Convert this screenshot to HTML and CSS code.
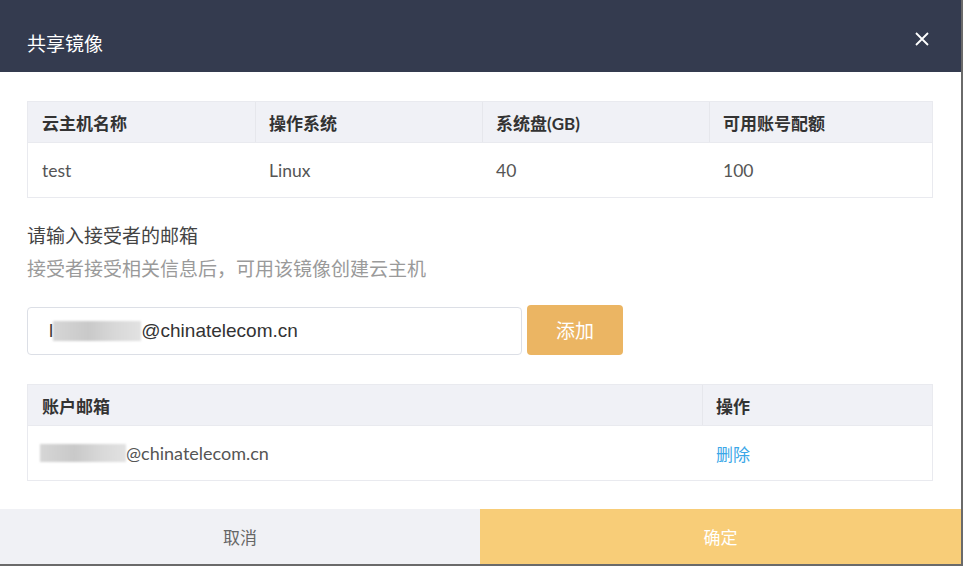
FILE: index.html
```html
<!DOCTYPE html>
<html lang="zh-CN">
<head>
<meta charset="utf-8">
<title>共享镜像</title>
<link rel="stylesheet" href="styles.css">
</head>
<body>
<div class="dialog">
  <div class="dlg-head">
    <span class="dlg-title">共享镜像</span>
    <svg class="close" width="14" height="14" viewBox="0 0 14 14"><path d="M1 1L13 13M13 1L1 13" stroke="#fff" stroke-width="1.8" fill="none"/></svg>
  </div>
  <div class="dlg-body">
    <div class="tbl tbl4">
      <div class="row th">
        <div class="cell">云主机名称</div>
        <div class="cell">操作系统</div>
        <div class="cell">系统盘(GB)</div>
        <div class="cell">可用账号配额</div>
      </div>
      <div class="row td">
        <div class="cell">test</div>
        <div class="cell">Linux</div>
        <div class="cell">40</div>
        <div class="cell">100</div>
      </div>
    </div>
    <div class="label">请输入接受者的邮箱</div>
    <div class="hint">接受者接受相关信息后，可用该镜像创建云主机</div>
    <div class="add-row">
      <div class="input"><span>l</span><span class="mask m1"></span><span>@chinatelecom.cn</span></div>
      <button class="btn-add">添加</button>
    </div>
    <div class="tbl tbl2">
      <div class="row th">
        <div class="cell">账户邮箱</div>
        <div class="cell">操作</div>
      </div>
      <div class="row td">
        <div class="cell email"><span class="mask m2"></span><span>@chinatelecom.cn</span></div>
        <div class="cell"><a class="del">删除</a></div>
      </div>
    </div>
  </div>
  <div class="dlg-foot">
    <div class="btn cancel">取消</div>
    <div class="btn ok">确定</div>
  </div>
</div>
</body>
</html>
```

FILE: styles.css
```css
html, body {
  margin: 0;
  padding: 0;
  background: #6a6a6a;
}
body {
  width: 963px;
  height: 566px;
  overflow: hidden;
  font-family: Lato, "Noto Sans CJK SC", sans-serif;
}
.dialog {
  width: 961px;
  height: 564px;
  background: #fff;
  display: flex;
  flex-direction: column;
}
.dlg-head {
  height: 72px;
  background: #343b4f;
  display: flex;
  align-items: center;
  justify-content: space-between;
  padding: 0 32px 0 27px;
  box-sizing: border-box;
}
.dlg-title {
  color: #fff;
  font-size: 19px;
  font-family: "Noto Sans CJK SC", sans-serif;
  margin-top: 13px;
}
.close {
  display: block;
  margin-top: 6px;
}
.dlg-body {
  flex: 1;
  padding: 29px 28px 0 27px;
}
.tbl {
  border: 1px solid #e9eaef;
}
.row {
  display: grid;
}
.tbl4 .row { grid-template-columns: 227px 227px 227px 1fr; }
.tbl2 .row { grid-template-columns: 674px 1fr; }
.th {
  height: 40px;
  background: #f0f1f6;
  font-weight: 700;
  color: #333;
  font-size: 17px;
}
.th .cell + .cell {
  border-left: 1px solid #e6e7ec;
}
.td {
  height: 54px;
  border-top: 1px solid #e9eaef;
  color: #555;
  font-size: 17.5px;
}
.cell {
  display: flex;
  align-items: center;
  padding-left: 14px;
}
.th .cell + .cell { padding-left: 13px; }
.td .cell + .cell { padding-left: 14px; }
.label {
  margin-top: 24px;
  font-size: 19px;
  color: #444;
  line-height: 26px;
  font-family: "Noto Sans CJK SC", sans-serif;
}
.hint {
  margin-top: 7px;
  font-size: 19px;
  color: #9a9a9a;
  line-height: 26px;
  font-family: "Noto Sans CJK SC", sans-serif;
}
.add-row {
  margin-top: 26px;
  display: flex;
  align-items: center;
  gap: 5px;
}
.input {
  width: 495px;
  height: 48px;
  box-sizing: border-box;
  border: 1px solid #dcdfe6;
  border-radius: 4px;
  display: flex;
  align-items: center;
  padding-left: 21px;
  font-family: "Liberation Sans", Arial, sans-serif;
  font-size: 19px;
  color: #333;
}
.mask {
  display: inline-block;
  background: linear-gradient(90deg, #d6d6d6, #c9c9c9 40%, #d8d8d8 70%, #e2e2e2);
  filter: blur(1px);
}
.m1 {
  width: 88px;
  height: 20px;
}
.m2 {
  width: 86px;
  height: 18px;
  margin-left: -2px;
}
.btn-add {
  width: 96px;
  height: 50px;
  border: none;
  border-radius: 4px;
  background: #ebb563;
  color: #fff;
  font-size: 19px;
  font-family: "Noto Sans CJK SC", sans-serif;
  margin-top: -3px;
}
.tbl2 {
  margin-top: 29px;
}
.email {
  font-size: 18px;
  color: #555;
}
.del {
  color: #3aa7e8;
  font-size: 17px;
}
.dlg-foot {
  height: 55px;
  display: flex;
}
.btn {
  display: flex;
  align-items: center;
  justify-content: center;
  font-size: 17px;
  font-family: "Noto Sans CJK SC", sans-serif;
}
.cancel {
  width: 480px;
  background: #f0f1f5;
  color: #666;
}
.ok {
  flex: 1;
  background: #f8cd78;
  color: #fff;
}
```
